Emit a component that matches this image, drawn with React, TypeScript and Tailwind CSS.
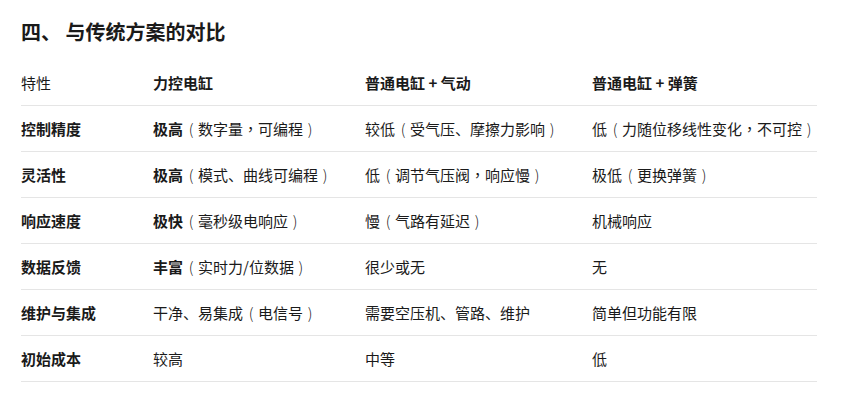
import React from "react";

type Cell = { b?: string; t?: string };

const header = ["特性", "力控电缸", "普通电缸 + 气动", "普通电缸 + 弹簧"];

const rows: { k: string; c: Cell[] }[] = [
  { k: "控制精度", c: [{ b: "极高", t: "（数字量，可编程）" }, { t: "较低（受气压、摩擦力影响）" }, { t: "低（力随位移线性变化，不可控）" }] },
  { k: "灵活性", c: [{ b: "极高", t: "（模式、曲线可编程）" }, { t: "低（调节气压阀，响应慢）" }, { t: "极低（更换弹簧）" }] },
  { k: "响应速度", c: [{ b: "极快", t: "（毫秒级电响应）" }, { t: "慢（气路有延迟）" }, { t: "机械响应" }] },
  { k: "数据反馈", c: [{ b: "丰富", t: "（实时力/位数据）" }, { t: "很少或无" }, { t: "无" }] },
  { k: "维护与集成", c: [{ t: "干净、易集成（电信号）" }, { t: "需要空压机、管路、维护" }, { t: "简单但功能有限" }] },
  { k: "初始成本", c: [{ t: "较高" }, { t: "中等" }, { t: "低" }] },
];

const grid = "grid grid-cols-[132px_212px_227px_225px] items-center h-[46px] border-b border-[#e5e5e5]";

function Punct({ s }: { s: string }) {
  const parts = s.split(/([（），])/);
  return (
    <>
      {parts.map((p, i) => {
        if (p === "（")
          return <span key={i} className="inline-block w-[15px] text-center pl-[1px] font-light">(</span>;
        if (p === "）")
          return <span key={i} className="inline-block w-[15px] text-center pr-[1px] font-light">)</span>;
        if (p === "，")
          return <span key={i} style={{ fontFamily: '"Noto Sans CJK TC", sans-serif' }}>{p}</span>;
        return <React.Fragment key={i}>{p}</React.Fragment>;
      })}
    </>
  );
}

export default function App() {
  return (
    <div
      className="w-[841px] h-[405px] bg-white text-[#1a1a1a] pl-[21px] pt-[18px]"
      style={{ fontFamily: '"Noto Sans CJK SC", "Liberation Sans", sans-serif' }}
    >
      <h1 className="text-[20px] leading-[28px] font-bold">四、 与传统方案的对比</h1>
      <div className="w-[796px] mt-[14px] text-[15px] leading-[22px]">
        <div className={grid}>
          {header.map((h, i) => (
            <div key={i} className={i === 0 ? "font-normal" : "font-bold"}>{h}</div>
          ))}
        </div>
        {rows.map((r) => (
          <div key={r.k} className={grid}>
            <div className="font-bold">{r.k}</div>
            {r.c.map((c, i) => (
              <div key={i} className="whitespace-nowrap">
                {c.b && <span className="font-bold">{c.b}</span>}
                {c.t && <Punct s={c.t} />}
              </div>
            ))}
          </div>
        ))}
      </div>
    </div>
  );
}
